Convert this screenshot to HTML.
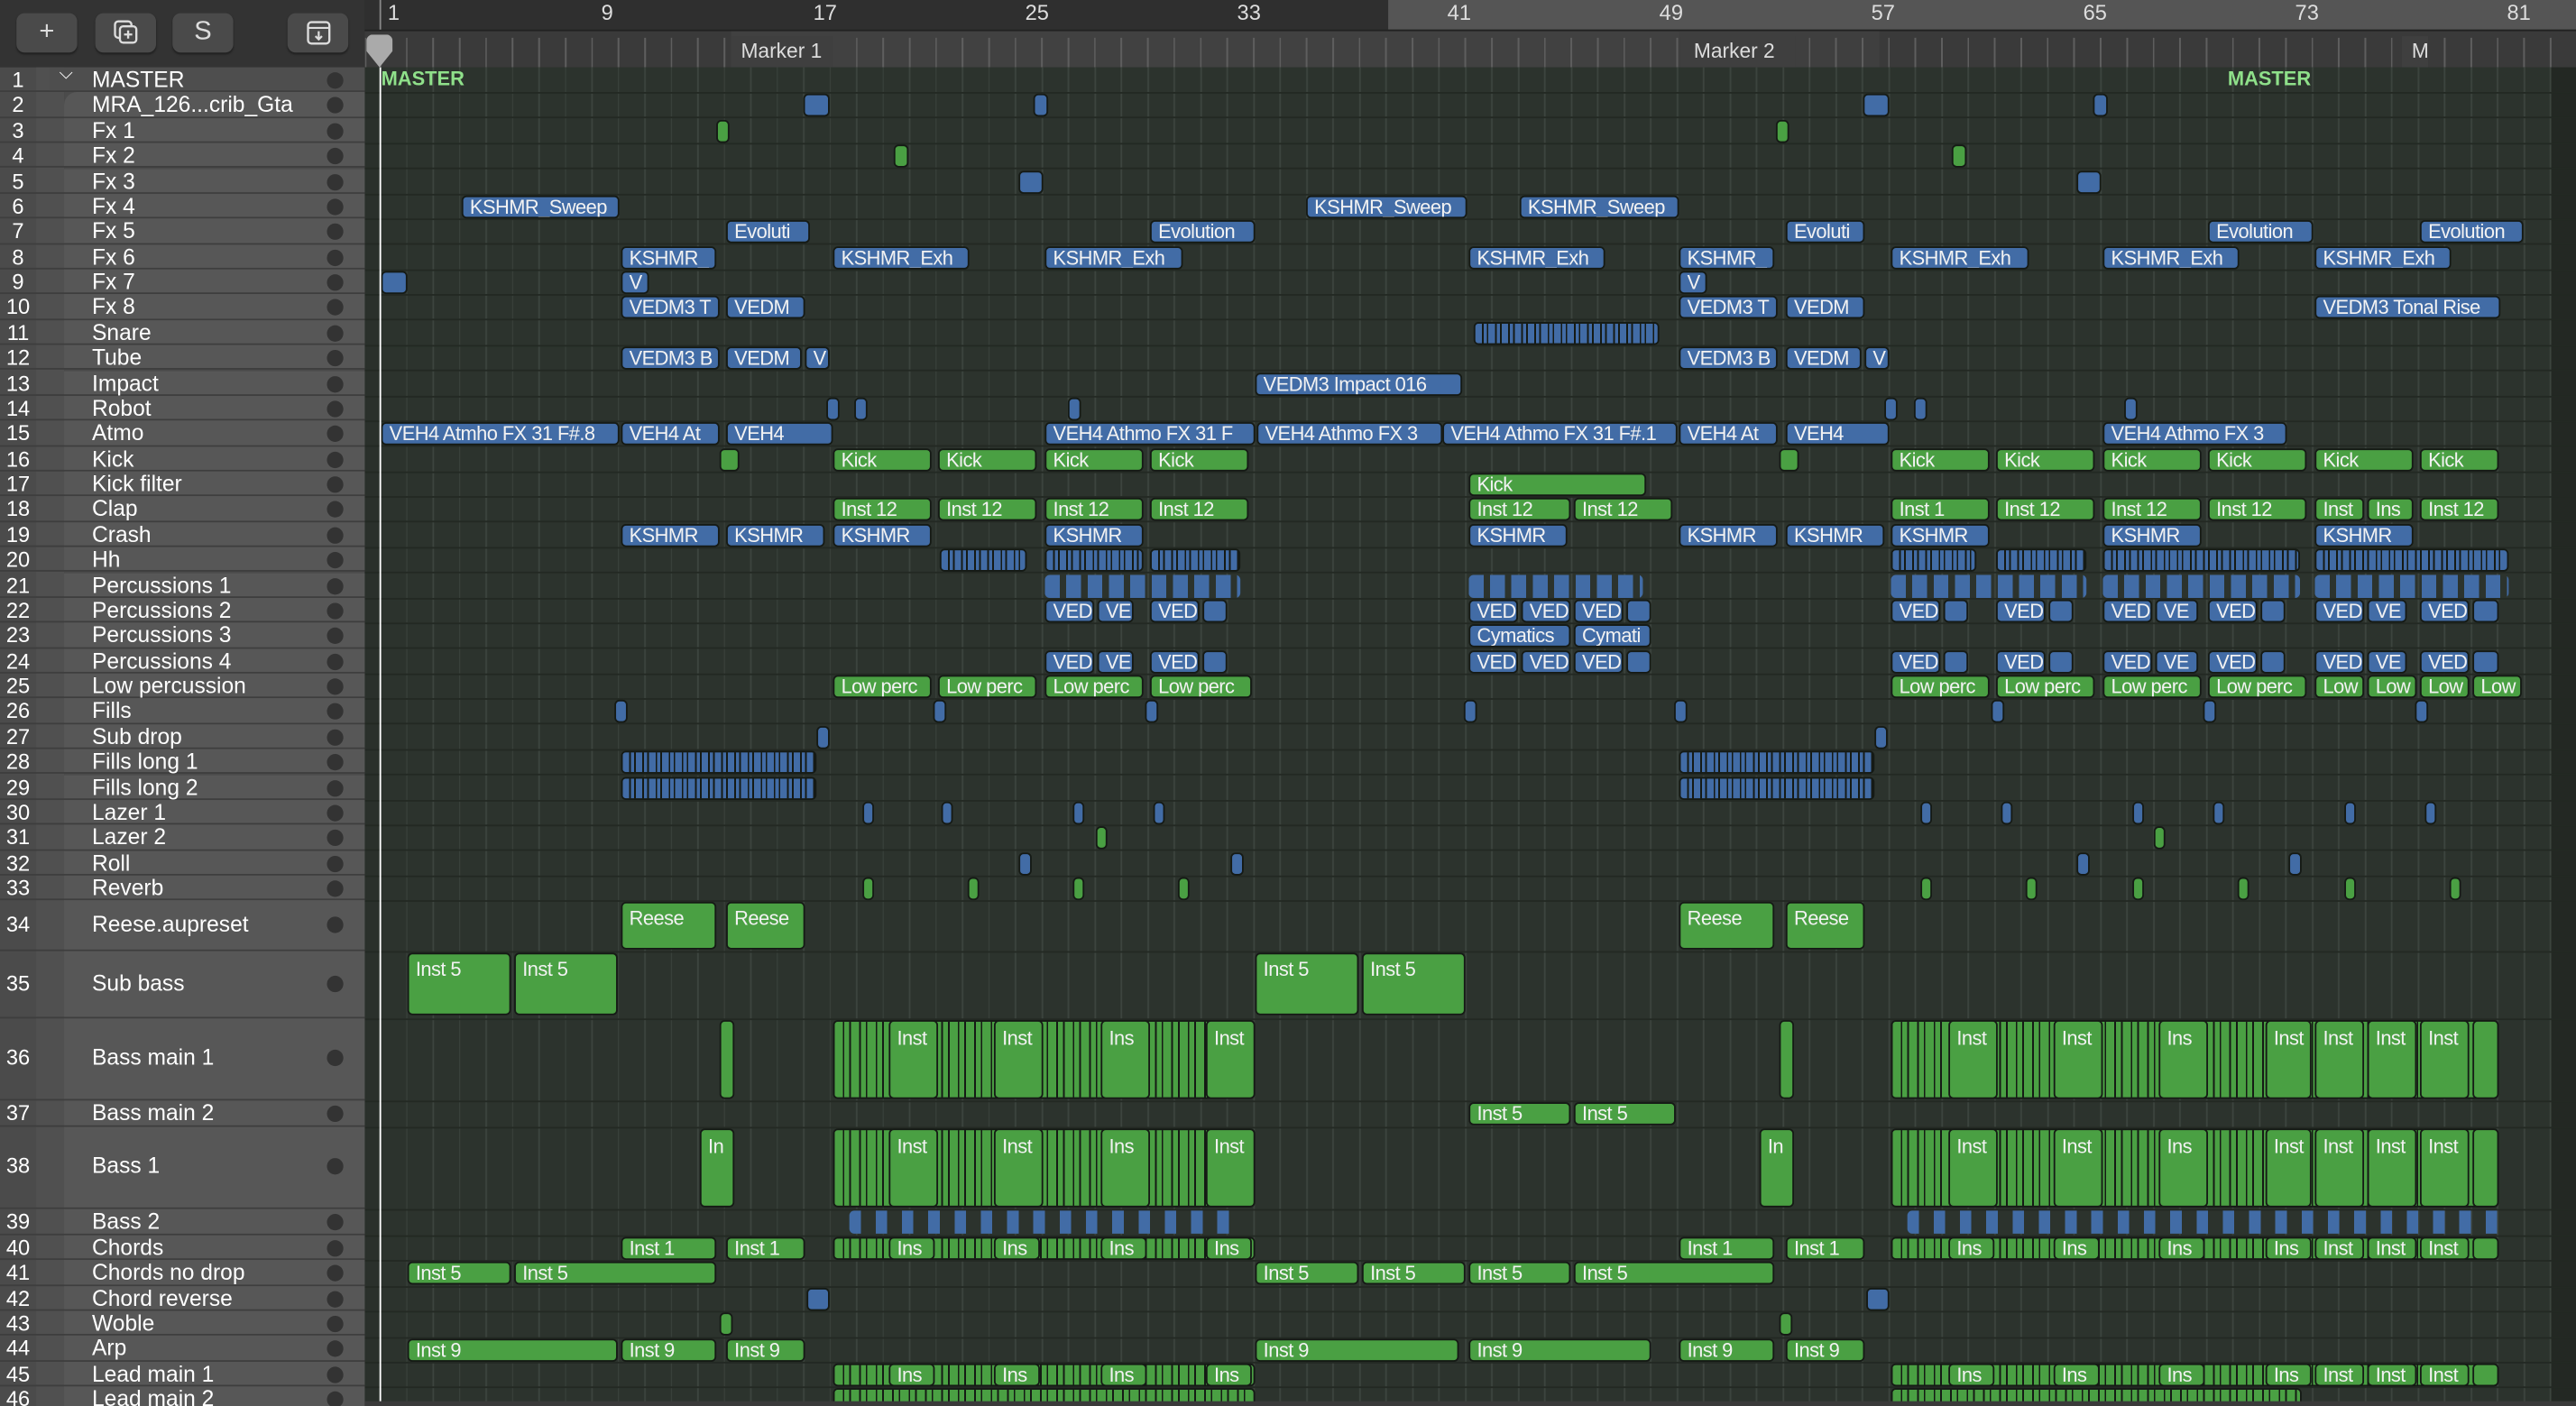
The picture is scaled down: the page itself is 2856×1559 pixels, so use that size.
<!DOCTYPE html>
<html><head><meta charset="utf-8"><style>
*{margin:0;padding:0;box-sizing:border-box}
html,body{width:2856px;height:1558px;overflow:hidden;background:#2c332d}
#w{position:absolute;left:0;top:0;width:1568px;height:856px;transform:scale(1.82143);transform-origin:0 0;font-family:"Liberation Sans",sans-serif;overflow:hidden}
.abs{position:absolute}
#hdr{left:0;top:0;width:222px;height:41px;background:#333}
.btn{position:absolute;top:8px;width:37px;height:24px;background:#4a4a4a;border-radius:5px;color:#ddd;font-size:16px;text-align:center;line-height:24px;box-shadow:0 1px 1px #222}
#tl{left:0;top:41px;width:222px;height:815px;background:#4b4b4b}
.tr{position:absolute;left:0;width:222px;border-bottom:1px solid #3e3e3e}
.tr .n{position:absolute;left:0;width:22px;text-align:center;color:#fff;font-size:13px}
.tr .nm{position:absolute;left:39px;right:0;top:0;bottom:0;background:#575757;}
.tr .nm span{position:absolute;left:17px;color:#fff;font-size:13.5px;white-space:nowrap}
.tr .dot{position:absolute;left:199px;width:10px;height:10px;border-radius:50%;background:#333}
#ru1{left:222px;top:0;width:1346px;height:18px;background:#2f2f2f}
#ru2{left:222px;top:18px;width:1346px;height:23px;background:#3a3a3a;border-top:1px solid #222}
.bn{position:absolute;top:0;color:#ddd;font-size:13px}
#ar{left:222px;top:41px;width:1346px;height:815px;background-color:#2c332d;background-image:repeating-linear-gradient(90deg,#3c443e 0 1px,transparent 1px 16.11px);background-position:9px 0}
.rl{position:absolute;left:222px;width:1346px;height:1px;background:#232923}
i{position:absolute;font-style:normal;color:#f2f2f2;font-size:12px;line-height:12px;letter-spacing:-0.3px;padding-left:4px;border:1px solid #151a15;border-radius:3px;overflow:hidden;white-space:nowrap;height:14px}
.b{background:#426ca6}.g{background:#4aa043}
.db{background:repeating-linear-gradient(90deg,#426ca6 0 4px,#151a15 4px 5px,#426ca6 5px 7px,#151a15 7px 8px);padding:0}
.dg{background:repeating-linear-gradient(90deg,#4aa043 0 5px,#151a15 5px 6px,#4aa043 6px 9px,#151a15 9px 10px);padding:0}
.tb{background:repeating-linear-gradient(90deg,#426ca6 0 9px,transparent 9px 13px);border:none;padding:0}
.sb{background:repeating-linear-gradient(90deg,#426ca6 0 7px,transparent 7px 16px);border:none;padding:0}
.y1{top:42px}.y2{top:57.4px}.y3{top:72.7px}.y4{top:88.1px}.y5{top:103.5px}.y6{top:118.9px}.y7{top:134.2px}.y8{top:149.6px}.y9{top:165px}.y10{top:180.4px}.y11{top:195.7px}.y12{top:211.1px}.y13{top:226.5px}.y14{top:241.9px}.y15{top:257.2px}.y16{top:272.6px}.y17{top:288px}.y18{top:303.4px}.y19{top:318.7px}.y20{top:334.1px}.y21{top:349.5px}.y22{top:364.9px}.y23{top:380.2px}.y24{top:395.6px}.y25{top:411px}.y26{top:426.4px}.y27{top:441.7px}.y28{top:457.1px}.y29{top:472.5px}.y30{top:487.9px}.y31{top:503.2px}.y32{top:518.6px}.y33{top:534px}
.y34{top:549px;height:29px}.y35{top:580px;height:38px}.y36{top:621px;height:48px;line-height:20px}.y37{top:671px}.y38{top:687px;height:48px;line-height:20px}.y39{top:737px}.y40{top:753px}.y41{top:768.4px}.y42{top:783.8px}.y43{top:799.1px}.y44{top:814.5px}.y45{top:829.9px}.y46{top:845.3px}
.y34,.y35{line-height:18px}
</style></head><body><div id="w">
<div id="hdr" class="abs">
<div class="btn" style="left:10px">+</div>
<div class="btn" style="left:58px"><svg width="18" height="18" viewBox="0 0 18 18" style="margin-top:3px"><rect x="2" y="2" width="10" height="10" rx="2" fill="none" stroke="#ddd" stroke-width="1.3"/><rect x="5" y="5" width="10" height="10" rx="2" fill="#4a4a4a" stroke="#ddd" stroke-width="1.3"/><path d="M10 7.5v5M7.5 10h5" stroke="#ddd" stroke-width="1.3"/></svg></div>
<div class="btn" style="left:105px">S</div>
<div class="btn" style="left:175px"><svg width="18" height="18" viewBox="0 0 18 18" style="margin-top:3px"><rect x="2.5" y="2.5" width="13" height="13" rx="2" fill="none" stroke="#ddd" stroke-width="1.3"/><path d="M2.5 6h13M9 8v5M7 11l2 2 2-2" fill="none" stroke="#ddd" stroke-width="1.2"/></svg></div>
</div>
<div id="ru1" class="abs"><div class="abs" style="left:623px;top:0;width:723px;height:18px;background:#555"></div></div>
<div id="ru2" class="abs">
<div class="abs" style="left:223px;top:0;width:577px;height:22px;background:rgba(255,255,255,.04)"></div>
<div class="abs" style="left:800px;top:0;width:122px;height:22px;background:#3f3f3f"></div>
<div class="abs" style="left:0;top:4px;width:1346px;height:18px;background:repeating-linear-gradient(90deg,#5e5e5e 0 1px,transparent 1px 16.11px);background-position:9px 0"></div>
<div class="abs" style="left:223px;top:3px;color:#ddd;font-size:12.5px;padding-left:6px;background:#3f3f3f;height:19px;line-height:18px;width:62px;white-space:nowrap">Marker 1</div>
<div class="abs" style="left:801px;top:3px;color:#ddd;font-size:12.5px;padding-left:8px;background:#3f3f3f;height:19px;line-height:18px;width:70px;white-space:nowrap">Marker 2</div>
<div class="abs" style="left:1240px;top:3px;color:#ddd;font-size:12.5px;padding-left:6px;background:#3f3f3f;height:19px;line-height:18px;width:16px;overflow:hidden">M</div>
<div class="abs" style="left:1px;top:2px;width:16px;height:20px;background:#aaa;clip-path:polygon(0 0,100% 0,100% 50%,50% 100%,0 50%);border-radius:4px"></div>
</div>
<div class="bn" style="left:236px">1</div><div class="bn" style="left:366px">9</div><div class="bn" style="left:495px">17</div><div class="bn" style="left:624px">25</div><div class="bn" style="left:753px">33</div><div class="bn" style="left:881px">41</div><div class="bn" style="left:1010px">49</div><div class="bn" style="left:1139px">57</div><div class="bn" style="left:1268px">65</div><div class="bn" style="left:1397px">73</div><div class="bn" style="left:1526px">81</div>
<div class="abs" style="left:231px;top:0;width:1px;height:18px;background:#888"></div>
<div id="ar" class="abs"></div>
<div class="abs" style="left:1553px;top:41px;width:15px;height:815px;background:#232823"></div>
<div class="abs" style="left:222px;top:41px;width:8px;height:815px;background:#2a302b"></div>

<div class="rl" style="top:56px"></div><div class="rl" style="top:71.4px"></div><div class="rl" style="top:86.8px"></div><div class="rl" style="top:102.1px"></div><div class="rl" style="top:117.5px"></div><div class="rl" style="top:132.9px"></div><div class="rl" style="top:148.2px"></div><div class="rl" style="top:163.6px"></div><div class="rl" style="top:179px"></div><div class="rl" style="top:194.4px"></div><div class="rl" style="top:209.7px"></div><div class="rl" style="top:225.1px"></div><div class="rl" style="top:240.5px"></div><div class="rl" style="top:255.9px"></div><div class="rl" style="top:271.2px"></div><div class="rl" style="top:286.6px"></div><div class="rl" style="top:302px"></div><div class="rl" style="top:317.4px"></div><div class="rl" style="top:332.7px"></div><div class="rl" style="top:348.1px"></div><div class="rl" style="top:363.5px"></div><div class="rl" style="top:378.9px"></div><div class="rl" style="top:394.2px"></div><div class="rl" style="top:409.6px"></div><div class="rl" style="top:425px"></div><div class="rl" style="top:440.4px"></div><div class="rl" style="top:455.7px"></div><div class="rl" style="top:471.1px"></div><div class="rl" style="top:486.5px"></div><div class="rl" style="top:501.9px"></div><div class="rl" style="top:517.2px"></div><div class="rl" style="top:532.6px"></div><div class="rl" style="top:548px"></div><div class="rl" style="top:579px"></div><div class="rl" style="top:620px"></div><div class="rl" style="top:670px"></div><div class="rl" style="top:686px"></div><div class="rl" style="top:736px"></div><div class="rl" style="top:752px"></div><div class="rl" style="top:767.4px"></div><div class="rl" style="top:782.8px"></div><div class="rl" style="top:798.1px"></div><div class="rl" style="top:813.5px"></div><div class="rl" style="top:828.9px"></div><div class="rl" style="top:844.3px"></div>

<div id="tl" class="abs"></div>
<div class="abs" style="left:22px;top:41px;width:17px;height:815px;background:#505050"></div>
<div class="tr" style="top:41px;height:15.4px"><span class="n" style="top:0">1</span><div class="nm" style="left:30px;background:#4e4e4e"><span style="left:26px;top:0">MASTER</span><span style="left:6px;top:-2px;font-size:11px">⌵</span></div><div class="dot" style="top:3px"></div></div>
<div class="tr" style="top:56.4px;height:15.4px"><span class="n">2</span><div class="nm" style="border-top-left-radius:8px"><span>MRA_126...crib_Gta</span></div><div class="dot" style="top:3px"></div></div>
<div class="tr" style="top:71.75px;height:15.4px"><span class="n">3</span><div class="nm"><span>Fx 1</span></div><div class="dot" style="top:3px"></div></div>
<div class="tr" style="top:87.1px;height:15.4px"><span class="n">4</span><div class="nm"><span>Fx 2</span></div><div class="dot" style="top:3px"></div></div>
<div class="tr" style="top:102.5px;height:15.4px"><span class="n">5</span><div class="nm"><span>Fx 3</span></div><div class="dot" style="top:3px"></div></div>
<div class="tr" style="top:117.9px;height:15.4px"><span class="n">6</span><div class="nm"><span>Fx 4</span></div><div class="dot" style="top:3px"></div></div>
<div class="tr" style="top:133.25px;height:15.4px"><span class="n">7</span><div class="nm"><span>Fx 5</span></div><div class="dot" style="top:3px"></div></div>
<div class="tr" style="top:148.6px;height:15.4px"><span class="n">8</span><div class="nm"><span>Fx 6</span></div><div class="dot" style="top:3px"></div></div>
<div class="tr" style="top:164px;height:15.4px"><span class="n">9</span><div class="nm"><span>Fx 7</span></div><div class="dot" style="top:3px"></div></div>
<div class="tr" style="top:179.4px;height:15.4px"><span class="n">10</span><div class="nm"><span>Fx 8</span></div><div class="dot" style="top:3px"></div></div>
<div class="tr" style="top:194.75px;height:15.4px"><span class="n">11</span><div class="nm"><span>Snare</span></div><div class="dot" style="top:3px"></div></div>
<div class="tr" style="top:210.1px;height:15.4px"><span class="n">12</span><div class="nm"><span>Tube</span></div><div class="dot" style="top:3px"></div></div>
<div class="tr" style="top:225.5px;height:15.4px"><span class="n">13</span><div class="nm"><span>Impact</span></div><div class="dot" style="top:3px"></div></div>
<div class="tr" style="top:240.9px;height:15.4px"><span class="n">14</span><div class="nm"><span>Robot</span></div><div class="dot" style="top:3px"></div></div>
<div class="tr" style="top:256.25px;height:15.4px"><span class="n">15</span><div class="nm"><span>Atmo</span></div><div class="dot" style="top:3px"></div></div>
<div class="tr" style="top:271.6px;height:15.4px"><span class="n">16</span><div class="nm"><span>Kick</span></div><div class="dot" style="top:3px"></div></div>
<div class="tr" style="top:287px;height:15.4px"><span class="n">17</span><div class="nm"><span>Kick filter</span></div><div class="dot" style="top:3px"></div></div>
<div class="tr" style="top:302.4px;height:15.4px"><span class="n">18</span><div class="nm"><span>Clap</span></div><div class="dot" style="top:3px"></div></div>
<div class="tr" style="top:317.75px;height:15.4px"><span class="n">19</span><div class="nm"><span>Crash</span></div><div class="dot" style="top:3px"></div></div>
<div class="tr" style="top:333.1px;height:15.4px"><span class="n">20</span><div class="nm"><span>Hh</span></div><div class="dot" style="top:3px"></div></div>
<div class="tr" style="top:348.5px;height:15.4px"><span class="n">21</span><div class="nm"><span>Percussions 1</span></div><div class="dot" style="top:3px"></div></div>
<div class="tr" style="top:363.9px;height:15.4px"><span class="n">22</span><div class="nm"><span>Percussions 2</span></div><div class="dot" style="top:3px"></div></div>
<div class="tr" style="top:379.25px;height:15.4px"><span class="n">23</span><div class="nm"><span>Percussions 3</span></div><div class="dot" style="top:3px"></div></div>
<div class="tr" style="top:394.6px;height:15.4px"><span class="n">24</span><div class="nm"><span>Percussions 4</span></div><div class="dot" style="top:3px"></div></div>
<div class="tr" style="top:410px;height:15.4px"><span class="n">25</span><div class="nm"><span>Low percussion</span></div><div class="dot" style="top:3px"></div></div>
<div class="tr" style="top:425.4px;height:15.4px"><span class="n">26</span><div class="nm"><span>Fills</span></div><div class="dot" style="top:3px"></div></div>
<div class="tr" style="top:440.75px;height:15.4px"><span class="n">27</span><div class="nm"><span>Sub drop</span></div><div class="dot" style="top:3px"></div></div>
<div class="tr" style="top:456.1px;height:15.4px"><span class="n">28</span><div class="nm"><span>Fills long 1</span></div><div class="dot" style="top:3px"></div></div>
<div class="tr" style="top:471.5px;height:15.4px"><span class="n">29</span><div class="nm"><span>Fills long 2</span></div><div class="dot" style="top:3px"></div></div>
<div class="tr" style="top:486.9px;height:15.4px"><span class="n">30</span><div class="nm"><span>Lazer 1</span></div><div class="dot" style="top:3px"></div></div>
<div class="tr" style="top:502.25px;height:15.4px"><span class="n">31</span><div class="nm"><span>Lazer 2</span></div><div class="dot" style="top:3px"></div></div>
<div class="tr" style="top:517.6px;height:15.4px"><span class="n">32</span><div class="nm"><span>Roll</span></div><div class="dot" style="top:3px"></div></div>
<div class="tr" style="top:533px;height:15.4px"><span class="n">33</span><div class="nm"><span>Reverb</span></div><div class="dot" style="top:3px"></div></div>
<div class="tr" style="top:548.4px;height:31px"><span class="n" style="top:7px">34</span><div class="nm"><span style="top:7px">Reese.aupreset</span></div><div class="dot" style="top:10px"></div></div>
<div class="tr" style="top:579.4px;height:41px"><span class="n" style="top:12px">35</span><div class="nm"><span style="top:12px">Sub bass</span></div><div class="dot" style="top:15px"></div></div>
<div class="tr" style="top:620.4px;height:50px"><span class="n" style="top:16px">36</span><div class="nm"><span style="top:16px">Bass main 1</span></div><div class="dot" style="top:19px"></div></div>
<div class="tr" style="top:670.4px;height:16px"><span class="n" style="top:0">37</span><div class="nm"><span>Bass main 2</span></div><div class="dot" style="top:3px"></div></div>
<div class="tr" style="top:686.4px;height:50px"><span class="n" style="top:16px">38</span><div class="nm"><span style="top:16px">Bass 1</span></div><div class="dot" style="top:19px"></div></div>
<div class="tr" style="top:736.4px;height:15.4px"><span class="n">39</span><div class="nm"><span>Bass 2</span></div><div class="dot" style="top:3px"></div></div>
<div class="tr" style="top:751.8px;height:15.4px"><span class="n">40</span><div class="nm"><span>Chords</span></div><div class="dot" style="top:3px"></div></div>
<div class="tr" style="top:767.2px;height:15.4px"><span class="n">41</span><div class="nm"><span>Chords no drop</span></div><div class="dot" style="top:3px"></div></div>
<div class="tr" style="top:782.6px;height:15.4px"><span class="n">42</span><div class="nm"><span>Chord reverse</span></div><div class="dot" style="top:3px"></div></div>
<div class="tr" style="top:798px;height:15.4px"><span class="n">43</span><div class="nm"><span>Woble</span></div><div class="dot" style="top:3px"></div></div>
<div class="tr" style="top:813.4px;height:15.4px"><span class="n">44</span><div class="nm"><span>Arp</span></div><div class="dot" style="top:3px"></div></div>
<div class="tr" style="top:828.8px;height:15.4px"><span class="n">45</span><div class="nm"><span>Lead main 1</span></div><div class="dot" style="top:3px"></div></div>
<div class="tr" style="top:844.2px;height:15.4px"><span class="n">46</span><div class="nm"><span>Lead main 2</span></div><div class="dot" style="top:3px"></div></div>

<div class="abs" style="left:232px;top:41px;color:#8fe08a;font-weight:bold;font-size:12px">MASTER</div>
<div class="abs" style="left:1356px;top:41px;color:#8fe08a;font-weight:bold;font-size:12px">MASTER</div>

<i class="b y2" style="left:489px;width:16px"></i><i class="b y2" style="left:629px;width:9px"></i><i class="b y2" style="left:1134px;width:16px"></i><i class="b y2" style="left:1274px;width:9px"></i>
<i class="g y3" style="left:436px;width:8px"></i><i class="g y3" style="left:1081px;width:8px"></i>
<i class="g y4" style="left:544px;width:9px"></i><i class="g y4" style="left:1188px;width:9px"></i>
<i class="b y5" style="left:620px;width:15px"></i><i class="b y5" style="left:1264px;width:15px"></i>
<i class="b y6" style="left:281px;width:96px">KSHMR_Sweep</i><i class="b y6" style="left:795px;width:98px">KSHMR_Sweep</i><i class="b y6" style="left:925px;width:97px">KSHMR_Sweep</i>
<i class="b y7" style="left:442px;width:51px">Evoluti</i><i class="b y7" style="left:700px;width:64px">Evolution</i><i class="b y7" style="left:1087px;width:48px">Evoluti</i><i class="b y7" style="left:1344px;width:64px">Evolution</i><i class="b y7" style="left:1473px;width:63px">Evolution</i>
<i class="b y8" style="left:378px;width:58px">KSHMR_</i><i class="b y8" style="left:507px;width:83px">KSHMR_Exh</i><i class="b y8" style="left:636px;width:84px">KSHMR_Exh</i><i class="b y8" style="left:894px;width:83px">KSHMR_Exh</i><i class="b y8" style="left:1022px;width:58px">KSHMR_</i><i class="b y8" style="left:1151px;width:84px">KSHMR_Exh</i><i class="b y8" style="left:1280px;width:83px">KSHMR_Exh</i><i class="b y8" style="left:1409px;width:83px">KSHMR_Exh</i>
<i class="b y9" style="left:232px;width:16px"></i><i class="b y9" style="left:378px;width:17px">V</i><i class="b y9" style="left:1022px;width:17px">V</i>
<i class="b y10" style="left:378px;width:60px">VEDM3 T</i><i class="b y10" style="left:442px;width:48px">VEDM</i><i class="b y10" style="left:1022px;width:60px">VEDM3 T</i><i class="b y10" style="left:1087px;width:48px">VEDM</i><i class="b y10" style="left:1409px;width:113px">VEDM3 Tonal Rise</i>
<i class="db y11" style="left:897px;width:113px"></i>
<i class="b y12" style="left:378px;width:60px">VEDM3 B</i><i class="b y12" style="left:442px;width:46px">VEDM</i><i class="b y12" style="left:490px;width:15px">V</i><i class="b y12" style="left:1022px;width:60px">VEDM3 B</i><i class="b y12" style="left:1087px;width:46px">VEDM</i><i class="b y12" style="left:1135px;width:15px">V</i>
<i class="b y13" style="left:764px;width:126px">VEDM3 Impact 016</i>
<i class="b y14" style="left:503px;width:8px"></i><i class="b y14" style="left:520px;width:8px"></i><i class="b y14" style="left:650px;width:8px"></i><i class="b y14" style="left:1147px;width:8px"></i><i class="b y14" style="left:1165px;width:8px"></i><i class="b y14" style="left:1293px;width:8px"></i>
<i class="b y15" style="left:232px;width:145px">VEH4 Atmho FX 31 F#.8</i><i class="b y15" style="left:378px;width:60px">VEH4 At</i><i class="b y15" style="left:442px;width:65px">VEH4</i><i class="b y15" style="left:636px;width:128px">VEH4 Athmo FX 31 F</i><i class="b y15" style="left:765px;width:113px">VEH4 Athmo FX 3</i><i class="b y15" style="left:878px;width:143px">VEH4 Athmo FX 31 F#.1</i><i class="b y15" style="left:1022px;width:60px">VEH4 At</i><i class="b y15" style="left:1087px;width:63px">VEH4</i><i class="b y15" style="left:1280px;width:112px">VEH4 Athmo FX 3</i>
<i class="g y16" style="left:438px;width:12px"></i><i class="g y16" style="left:507px;width:60px">Kick</i><i class="g y16" style="left:571px;width:60px">Kick</i><i class="g y16" style="left:636px;width:60px">Kick</i><i class="g y16" style="left:700px;width:60px">Kick</i><i class="g y16" style="left:1083px;width:12px"></i><i class="g y16" style="left:1151px;width:60px">Kick</i><i class="g y16" style="left:1215px;width:60px">Kick</i><i class="g y16" style="left:1280px;width:60px">Kick</i><i class="g y16" style="left:1344px;width:60px">Kick</i><i class="g y16" style="left:1409px;width:60px">Kick</i><i class="g y16" style="left:1473px;width:48px">Kick</i>
<i class="g y17" style="left:894px;width:108px">Kick</i>
<i class="g y18" style="left:507px;width:60px">Inst 12</i><i class="g y18" style="left:571px;width:60px">Inst 12</i><i class="g y18" style="left:636px;width:60px">Inst 12</i><i class="g y18" style="left:700px;width:60px">Inst 12</i><i class="g y18" style="left:894px;width:62px">Inst 12</i><i class="g y18" style="left:958px;width:60px">Inst 12</i><i class="g y18" style="left:1151px;width:60px">Inst 1</i><i class="g y18" style="left:1215px;width:60px">Inst 12</i><i class="g y18" style="left:1280px;width:60px">Inst 12</i><i class="g y18" style="left:1344px;width:60px">Inst 12</i><i class="g y18" style="left:1409px;width:30px">Inst</i><i class="g y18" style="left:1441px;width:28px">Ins</i><i class="g y18" style="left:1473px;width:48px">Inst 12</i>
<i class="b y19" style="left:378px;width:60px">KSHMR</i><i class="b y19" style="left:442px;width:60px">KSHMR</i><i class="b y19" style="left:507px;width:60px">KSHMR</i><i class="b y19" style="left:636px;width:60px">KSHMR</i><i class="b y19" style="left:894px;width:60px">KSHMR</i><i class="b y19" style="left:1022px;width:60px">KSHMR</i><i class="b y19" style="left:1087px;width:60px">KSHMR</i><i class="b y19" style="left:1151px;width:60px">KSHMR</i><i class="b y19" style="left:1280px;width:60px">KSHMR</i><i class="b y19" style="left:1409px;width:60px">KSHMR</i>
<i class="db y20" style="left:572px;width:53px"></i><i class="db y20" style="left:636px;width:60px"></i><i class="db y20" style="left:700px;width:55px"></i><i class="db y20" style="left:1151px;width:52px"></i><i class="db y20" style="left:1215px;width:55px"></i><i class="db y20" style="left:1280px;width:120px"></i><i class="db y20" style="left:1409px;width:118px"></i>
<i class="tb y21" style="left:636px;width:119px"></i><i class="tb y21" style="left:894px;width:106px"></i><i class="tb y21" style="left:1151px;width:119px"></i><i class="tb y21" style="left:1280px;width:120px"></i><i class="tb y21" style="left:1409px;width:118px"></i>
<i class="b y22" style="left:636px;width:30px">VED</i><i class="b y22" style="left:668px;width:22px">VE</i><i class="b y22" style="left:700px;width:30px">VED</i><i class="b y22" style="left:732px;width:15px"></i><i class="b y22" style="left:894px;width:30px">VED</i><i class="b y22" style="left:926px;width:30px">VED</i><i class="b y22" style="left:958px;width:30px">VED</i><i class="b y22" style="left:990px;width:15px"></i><i class="b y22" style="left:1151px;width:30px">VED</i><i class="b y22" style="left:1183px;width:15px"></i><i class="b y22" style="left:1215px;width:30px">VED</i><i class="b y22" style="left:1247px;width:15px"></i><i class="b y22" style="left:1280px;width:30px">VED</i><i class="b y22" style="left:1312px;width:26px">VE</i><i class="b y22" style="left:1344px;width:30px">VED</i><i class="b y22" style="left:1376px;width:15px"></i><i class="b y22" style="left:1409px;width:30px">VED</i><i class="b y22" style="left:1441px;width:24px">VE</i><i class="b y22" style="left:1473px;width:30px">VED</i><i class="b y22" style="left:1505px;width:16px"></i>
<i class="b y23" style="left:894px;width:62px">Cymatics</i><i class="b y23" style="left:958px;width:47px">Cymati</i>
<i class="b y24" style="left:636px;width:30px">VED</i><i class="b y24" style="left:668px;width:22px">VE</i><i class="b y24" style="left:700px;width:30px">VED</i><i class="b y24" style="left:732px;width:15px"></i><i class="b y24" style="left:894px;width:30px">VED</i><i class="b y24" style="left:926px;width:30px">VED</i><i class="b y24" style="left:958px;width:30px">VED</i><i class="b y24" style="left:990px;width:15px"></i><i class="b y24" style="left:1151px;width:30px">VED</i><i class="b y24" style="left:1183px;width:15px"></i><i class="b y24" style="left:1215px;width:30px">VED</i><i class="b y24" style="left:1247px;width:15px"></i><i class="b y24" style="left:1280px;width:30px">VED</i><i class="b y24" style="left:1312px;width:26px">VE</i><i class="b y24" style="left:1344px;width:30px">VED</i><i class="b y24" style="left:1376px;width:15px"></i><i class="b y24" style="left:1409px;width:30px">VED</i><i class="b y24" style="left:1441px;width:24px">VE</i><i class="b y24" style="left:1473px;width:30px">VED</i><i class="b y24" style="left:1505px;width:16px"></i>
<i class="g y25" style="left:507px;width:60px">Low perc</i><i class="g y25" style="left:571px;width:60px">Low perc</i><i class="g y25" style="left:636px;width:60px">Low perc</i><i class="g y25" style="left:700px;width:62px">Low perc</i><i class="g y25" style="left:1151px;width:60px">Low perc</i><i class="g y25" style="left:1215px;width:60px">Low perc</i><i class="g y25" style="left:1280px;width:60px">Low perc</i><i class="g y25" style="left:1344px;width:60px">Low perc</i><i class="g y25" style="left:1409px;width:30px">Low</i><i class="g y25" style="left:1441px;width:30px">Low</i><i class="g y25" style="left:1473px;width:30px">Low</i><i class="g y25" style="left:1505px;width:30px">Low</i>
<i class="b y26" style="left:374px;width:8px"></i><i class="b y26" style="left:568px;width:8px"></i><i class="b y26" style="left:697px;width:8px"></i><i class="b y26" style="left:891px;width:8px"></i><i class="b y26" style="left:1019px;width:8px"></i><i class="b y26" style="left:1212px;width:8px"></i><i class="b y26" style="left:1341px;width:8px"></i><i class="b y26" style="left:1470px;width:8px"></i>
<i class="b y27" style="left:497px;width:8px"></i><i class="b y27" style="left:1141px;width:8px"></i>
<i class="db y28" style="left:378px;width:119px"></i><i class="db y28" style="left:1022px;width:119px"></i>
<i class="db y29" style="left:378px;width:119px"></i><i class="db y29" style="left:1022px;width:119px"></i>
<i class="b y30" style="left:525px;width:7px"></i><i class="b y30" style="left:573px;width:7px"></i><i class="b y30" style="left:653px;width:7px"></i><i class="b y30" style="left:702px;width:7px"></i><i class="b y30" style="left:1169px;width:7px"></i><i class="b y30" style="left:1218px;width:7px"></i><i class="b y30" style="left:1298px;width:7px"></i><i class="b y30" style="left:1347px;width:7px"></i><i class="b y30" style="left:1427px;width:7px"></i><i class="b y30" style="left:1476px;width:7px"></i>
<i class="g y31" style="left:667px;width:7px"></i><i class="g y31" style="left:1311px;width:7px"></i>
<i class="b y32" style="left:620px;width:8px"></i><i class="b y32" style="left:749px;width:8px"></i><i class="b y32" style="left:1264px;width:8px"></i><i class="b y32" style="left:1393px;width:8px"></i>
<i class="g y33" style="left:525px;width:7px"></i><i class="g y33" style="left:589px;width:7px"></i><i class="g y33" style="left:653px;width:7px"></i><i class="g y33" style="left:717px;width:7px"></i><i class="g y33" style="left:1169px;width:7px"></i><i class="g y33" style="left:1233px;width:7px"></i><i class="g y33" style="left:1298px;width:7px"></i><i class="g y33" style="left:1362px;width:7px"></i><i class="g y33" style="left:1427px;width:7px"></i><i class="g y33" style="left:1491px;width:7px"></i>
<i class="g y34" style="left:378px;width:58px">Reese</i><i class="g y34" style="left:442px;width:48px">Reese</i><i class="g y34" style="left:1022px;width:58px">Reese</i><i class="g y34" style="left:1087px;width:48px">Reese</i>
<i class="g y35" style="left:248px;width:63px">Inst 5</i><i class="g y35" style="left:313px;width:63px">Inst 5</i><i class="g y35" style="left:764px;width:63px">Inst 5</i><i class="g y35" style="left:829px;width:63px">Inst 5</i>
<i class="g y36" style="left:438px;width:9px"></i><i class="dg y36" style="left:507px;width:257px"></i><i class="g y36" style="left:541px;width:30px">Inst</i><i class="g y36" style="left:605px;width:30px">Inst</i><i class="g y36" style="left:670px;width:30px">Ins</i><i class="g y36" style="left:734px;width:30px">Inst</i>
<i class="g y36" style="left:1083px;width:9px"></i><i class="dg y36" style="left:1151px;width:370px"></i><i class="g y36" style="left:1186px;width:30px">Inst</i><i class="g y36" style="left:1250px;width:30px">Inst</i><i class="g y36" style="left:1314px;width:30px">Ins</i><i class="g y36" style="left:1379px;width:28px">Inst</i><i class="g y36" style="left:1409px;width:30px">Inst</i><i class="g y36" style="left:1441px;width:30px">Inst</i><i class="g y36" style="left:1473px;width:30px">Inst</i><i class="g y36" style="left:1505px;width:16px"></i>
<i class="g y37" style="left:894px;width:62px">Inst 5</i><i class="g y37" style="left:958px;width:62px">Inst 5</i>
<i class="g y38" style="left:426px;width:21px">In</i><i class="dg y38" style="left:507px;width:257px"></i><i class="g y38" style="left:541px;width:30px">Inst</i><i class="g y38" style="left:605px;width:30px">Inst</i><i class="g y38" style="left:670px;width:30px">Ins</i><i class="g y38" style="left:734px;width:30px">Inst</i>
<i class="g y38" style="left:1071px;width:21px">In</i><i class="dg y38" style="left:1151px;width:370px"></i><i class="g y38" style="left:1186px;width:30px">Inst</i><i class="g y38" style="left:1250px;width:30px">Inst</i><i class="g y38" style="left:1314px;width:30px">Ins</i><i class="g y38" style="left:1379px;width:28px">Inst</i><i class="g y38" style="left:1409px;width:30px">Inst</i><i class="g y38" style="left:1441px;width:30px">Inst</i><i class="g y38" style="left:1473px;width:30px">Inst</i><i class="g y38" style="left:1505px;width:16px"></i>
<i class="sb y39" style="left:517px;width:238px"></i><i class="sb y39" style="left:1161px;width:362px"></i>
<i class="g y40" style="left:378px;width:58px">Inst 1</i><i class="g y40" style="left:442px;width:48px">Inst 1</i><i class="dg y40" style="left:507px;width:257px"></i><i class="g y40" style="left:541px;width:28px">Ins</i><i class="g y40" style="left:605px;width:28px">Ins</i><i class="g y40" style="left:670px;width:28px">Ins</i><i class="g y40" style="left:734px;width:28px">Ins</i>
<i class="g y40" style="left:1022px;width:58px">Inst 1</i><i class="g y40" style="left:1087px;width:48px">Inst 1</i><i class="dg y40" style="left:1151px;width:370px"></i><i class="g y40" style="left:1186px;width:28px">Ins</i><i class="g y40" style="left:1250px;width:28px">Ins</i><i class="g y40" style="left:1314px;width:28px">Ins</i><i class="g y40" style="left:1379px;width:28px">Ins</i><i class="g y40" style="left:1409px;width:30px">Inst</i><i class="g y40" style="left:1441px;width:30px">Inst</i><i class="g y40" style="left:1473px;width:30px">Inst</i><i class="g y40" style="left:1505px;width:16px"></i>
<i class="g y41" style="left:248px;width:63px">Inst 5</i><i class="g y41" style="left:313px;width:123px">Inst 5</i><i class="g y41" style="left:764px;width:63px">Inst 5</i><i class="g y41" style="left:829px;width:63px">Inst 5</i><i class="g y41" style="left:894px;width:62px">Inst 5</i><i class="g y41" style="left:958px;width:122px">Inst 5</i>
<i class="b y42" style="left:491px;width:14px"></i><i class="b y42" style="left:1136px;width:14px"></i>
<i class="g y43" style="left:438px;width:8px"></i><i class="g y43" style="left:1083px;width:8px"></i>
<i class="g y44" style="left:248px;width:128px">Inst 9</i><i class="g y44" style="left:378px;width:58px">Inst 9</i><i class="g y44" style="left:442px;width:48px">Inst 9</i><i class="g y44" style="left:764px;width:124px">Inst 9</i><i class="g y44" style="left:894px;width:111px">Inst 9</i><i class="g y44" style="left:1022px;width:58px">Inst 9</i><i class="g y44" style="left:1087px;width:48px">Inst 9</i>
<i class="dg y45" style="left:507px;width:257px"></i><i class="g y45" style="left:541px;width:28px">Ins</i><i class="g y45" style="left:605px;width:28px">Ins</i><i class="g y45" style="left:670px;width:28px">Ins</i><i class="g y45" style="left:734px;width:28px">Ins</i>
<i class="dg y45" style="left:1151px;width:370px"></i><i class="g y45" style="left:1186px;width:28px">Ins</i><i class="g y45" style="left:1250px;width:28px">Ins</i><i class="g y45" style="left:1314px;width:28px">Ins</i><i class="g y45" style="left:1379px;width:28px">Ins</i><i class="g y45" style="left:1409px;width:30px">Inst</i><i class="g y45" style="left:1441px;width:30px">Inst</i><i class="g y45" style="left:1473px;width:30px">Inst</i><i class="g y45" style="left:1505px;width:16px"></i>
<i class="dg y46" style="left:507px;width:257px"></i><i class="dg y46" style="left:1151px;width:250px"></i>

<div class="abs" style="left:231px;top:41px;width:1px;height:815px;background:#fff"></div>
<div class="abs" style="left:222px;top:853px;width:1346px;height:3px;background:#3a3a3a"></div>
</div></body></html>
